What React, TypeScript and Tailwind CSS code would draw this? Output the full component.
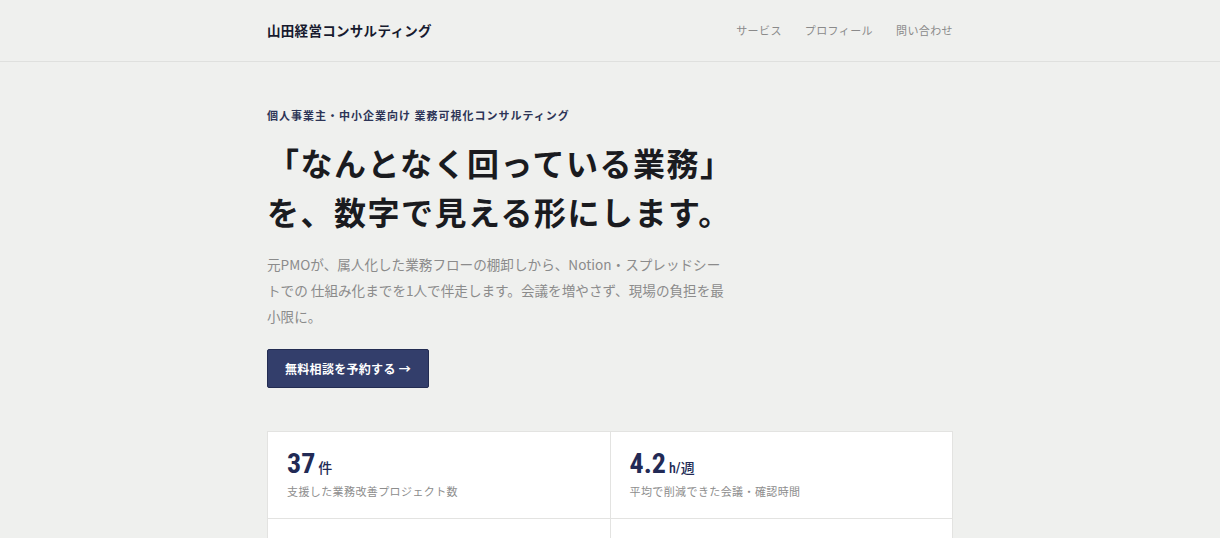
const stats = [
  { value: '37', unit: '件', label: '支援した業務改善プロジェクト数' },
  { value: '4.2', unit: 'h/週', label: '平均で削減できた会議・確認時間' },
  { value: '92', unit: '%', label: '導入後も仕組みを継続しているクライアント' },
  { value: '3', unit: 'ヶ月', label: '可視化から定着までの標準期間' },
];

const App = () => {
  return (
    <div
      className="min-h-screen bg-[#eff0ee] text-[#1c1f2b]"
      style={{ fontFamily: '"Noto Sans CJK JP", "Noto Sans", sans-serif' }}
    >
      {/* Header */}
      <header className="border-b border-[#dfe0de]">
        <div className="max-w-[686px] mx-auto h-[61px] flex items-center justify-between">
          <span className="text-[13.5px] font-bold text-[#171a2e] tracking-[0.3px]">山田経営コンサルティング</span>
          <nav className="flex items-center gap-[23px] text-[11px] text-[#8a8a8a] tracking-[0.4px]">
            <a>サービス</a>
            <a>プロフィール</a>
            <a>問い合わせ</a>
          </nav>
        </div>
      </header>

      <main className="max-w-[686px] mx-auto pt-[45px] pb-20">
        {/* Hero */}
        <p className="text-[11px] font-bold text-[#2d3456] tracking-[1px] leading-[16px]">
          個人事業主・中小企業向け 業務可視化コンサルティング
        </p>
        <h1 className="mt-[15px] text-[32px] font-bold leading-[49px] tracking-[1.5px] text-[#1a1b1f]">
          「なんとなく回っている業務」
          <br />
          を、数字で見える形にします。
        </h1>
        <p className="mt-[15px] max-w-[460px] text-[13.6px] leading-[26px] text-[#8b8b8b]">
          元PMOが、属人化した業務フローの棚卸しから、Notion・スプレッドシートでの 仕組み化までを1人で伴走します。会議を増やさず、現場の負担を最小限に。
        </p>
        <button className="mt-[20px] h-[39px] px-[17px] bg-[#333e6b] border border-[#232c52] rounded-[2px] text-white text-[12px] font-bold tracking-[0.3px]">
          無料相談を予約する →
        </button>

        {/* Stats */}
        <div className="mt-[43px] grid grid-cols-2 gap-px bg-[#e3e3e1] border border-[#e3e3e1]">
          {stats.map((s) => (
            <div key={s.label} className="bg-white px-[19px] pt-[15px] pb-[20px]">
              <div
                className="flex items-baseline text-[#222a55]"
                style={{ fontFamily: '"Roboto Condensed", "Liberation Sans Narrow", "DejaVu Sans Condensed", "Noto Sans CJK JP", sans-serif' }}
              >
                <span className="text-[28px] leading-[34px] font-bold">{s.value}</span>
                <span className="ml-[3px] text-[14px] font-medium">{s.unit}</span>
              </div>
              <p className="mt-[3px] text-[11px] leading-[14px] text-[#8d8d8d] tracking-[0.4px]">{s.label}</p>
            </div>
          ))}
        </div>
      </main>
    </div>
  );
};

export default App;
